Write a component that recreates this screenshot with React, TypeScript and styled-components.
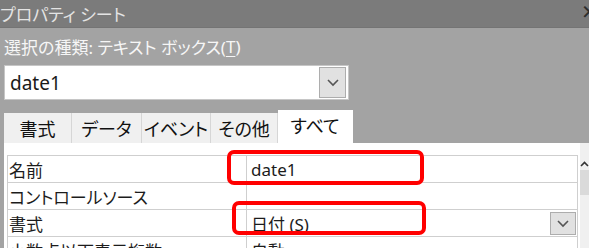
import React from 'react';
import styled, { createGlobalStyle } from 'styled-components';

const GlobalStyle = createGlobalStyle`
  html, body {
    margin: 0;
    padding: 0;
    background: #ffffff;
  }
  body {
    font-family: 'Noto Sans', 'Noto Sans CJK JP', sans-serif;
    font-feature-settings: 'palt';
  }
`;

const Sheet = styled.div`
  width: 589px;
  height: 248px;
  overflow: hidden;
  position: relative;
  display: flex;
  flex-direction: column;
  background: #a3a3a3;
`;

const TitleBar = styled.div`
  height: 27px;
  flex: none;
  display: flex;
  align-items: center;
  justify-content: space-between;
  background: #7b7b7b;
  border-bottom: 1px solid #747474;
  color: #e4e4e4;
  font-size: 17px;
  padding-left: 0;
  overflow: hidden;
`;

const Close = styled.span`
  color: #2e2e2e;
  font-size: 20px;
  margin-right: -9px;
  margin-top: -4px;
`;

const Body = styled.div`
  padding: 0 0 0 4px;
  flex: none;
`;

const SelType = styled.div`
  height: 37px;
  display: flex;
  align-items: center;
  color: #f6f6f6;
  font-size: 17px;
  padding-left: 0;
`;

const Under = styled.span`
  text-decoration: underline;
  text-underline-offset: 3px;
`;

const Combo = styled.div`
  width: 345px;
  height: 35px;
  box-sizing: border-box;
  background: #ffffff;
  border: 1px solid #c6c6c6;
  display: flex;
  align-items: center;
  justify-content: space-between;
  padding: 0 2px 0 5px;
  font-size: 19px;
  color: #1a1a1a;
`;

const DropButton = styled.div<{ $w: number; $h: number }>`
  width: ${p => p.$w}px;
  height: ${p => p.$h}px;
  box-sizing: border-box;
  background: #e1e1e1;
  border: 1px solid #adadad;
  display: flex;
  align-items: center;
  justify-content: center;
`;

const Tabs = styled.div`
  display: flex;
  align-items: flex-end;
  margin-top: 10px;
  height: 33px;
`;

const Tab = styled.div<{ $w: number; $active?: boolean }>`
  width: ${p => p.$w}px;
  height: ${p => (p.$active ? 33 : 30)}px;
  box-sizing: border-box;
  background: ${p => (p.$active ? '#ffffff' : '#f0f0f0')};
  border-right: 1px solid ${p => (p.$active ? '#ffffff' : '#d6d6d6')};
  display: flex;
  align-items: center;
  justify-content: center;
  font-size: 18px;
  color: #111111;
  padding-bottom: ${p => (p.$active ? 4 : 0)}px;
`;

const Panel = styled.div`
  flex: 1;
  margin-left: 4px;
  background: #ffffff;
  display: flex;
  align-items: flex-start;
  padding: 12px 0 0 3px;
  position: relative;
`;

const Grid = styled.div`
  width: 569px;
  border-left: 1px solid #cfcfcf;
  border-right: 1px solid #cfcfcf;
  border-top: 1px solid #cfcfcf;
  flex: none;
`;

const Row = styled.div`
  display: grid;
  grid-template-columns: 239px 1fr;
  height: 26px;
  border-bottom: 1px solid #cfcfcf;
`;

const Label = styled.div`
  border-right: 1px solid #cfcfcf;
  display: flex;
  align-items: center;
  padding-left: 1px;
  font-size: 17px;
  color: #1c1c1c;
  white-space: nowrap;
`;

const Value = styled.div`
  display: flex;
  align-items: center;
  justify-content: space-between;
  padding-left: 4px;
  padding-right: 1px;
  font-size: 17px;
  color: #1c1c1c;
`;

const ScrollBar = styled.div`
  width: 11px;
  margin-left: 2px;
  margin-top: -12px;
  align-self: stretch;
  background: #f0f0f0;
  display: flex;
  flex-direction: column;
  align-items: center;
`;

const ScrollUp = styled.div`
  height: 27px;
  width: 100%;
  display: flex;
  align-items: flex-end;
  justify-content: center;
  padding-bottom: 3px;
  box-sizing: border-box;
`;

const Thumb = styled.div`
  width: 100%;
  height: 25px;
  background: #dadada;
  margin-top: 0;
`;

const Highlight = styled.div<{ $x: number; $y: number; $w: number; $h: number }>`
  position: absolute;
  left: ${p => p.$x}px;
  top: ${p => p.$y}px;
  width: ${p => p.$w}px;
  height: ${p => p.$h}px;
  box-sizing: border-box;
  border: 4px solid #ff0000;
  border-radius: 7px;
`;

const Chevron = () => (
  <svg width="14" height="9" viewBox="0 0 14 9">
    <path d="M2 2 L7 7 L12 2" fill="none" stroke="#555" strokeWidth="1.6" />
  </svg>
);

const rows = [
  { label: '名前', value: 'date1' },
  { label: 'コントロールソース', value: '' },
  { label: '書式', value: '日付 (S)', drop: true },
  { label: '小数点以下表示桁数', value: '自動' },
];

const tabs = [
  { name: '書式', w: 68 },
  { name: 'データ', w: 70 },
  { name: 'イベント', w: 69 },
  { name: 'その他', w: 67 },
  { name: 'すべて', w: 75, active: true },
];

export default function App() {
  return (
    <>
      <GlobalStyle />
      <Sheet>
        <TitleBar>
          <span>プロパティ シート</span>
          <Close>✕</Close>
        </TitleBar>
        <Body>
          <SelType>
            選択の種類:&nbsp;テキスト ボックス(<Under>T</Under>)
          </SelType>
          <Combo>
            <span>date1</span>
            <DropButton $w={27} $h={31}>
              <Chevron />
            </DropButton>
          </Combo>
          <Tabs>
            {tabs.map(t => (
              <Tab key={t.name} $w={t.w} $active={t.active}>
                {t.name}
              </Tab>
            ))}
          </Tabs>
        </Body>
        <Panel>
          <Grid>
            {rows.map(r => (
              <Row key={r.label}>
                <Label>{r.label}</Label>
                <Value>
                  <span>{r.value}</span>
                  {r.drop && (
                    <DropButton $w={26} $h={23}>
                      <Chevron />
                    </DropButton>
                  )}
                </Value>
              </Row>
            ))}
          </Grid>
          <ScrollBar>
            <ScrollUp>
              <svg width="9" height="6" viewBox="0 0 9 6">
                <path d="M1 5 L4.5 1.5 L8 5" fill="none" stroke="#333" strokeWidth="1.6" />
              </svg>
            </ScrollUp>
            <Thumb />
          </ScrollBar>
        </Panel>
        <Highlight $x={227} $y={150} $w={197} $h={35} />
        <Highlight $x={232} $y={201} $w={194} $h={34} />
      </Sheet>
    </>
  );
}
